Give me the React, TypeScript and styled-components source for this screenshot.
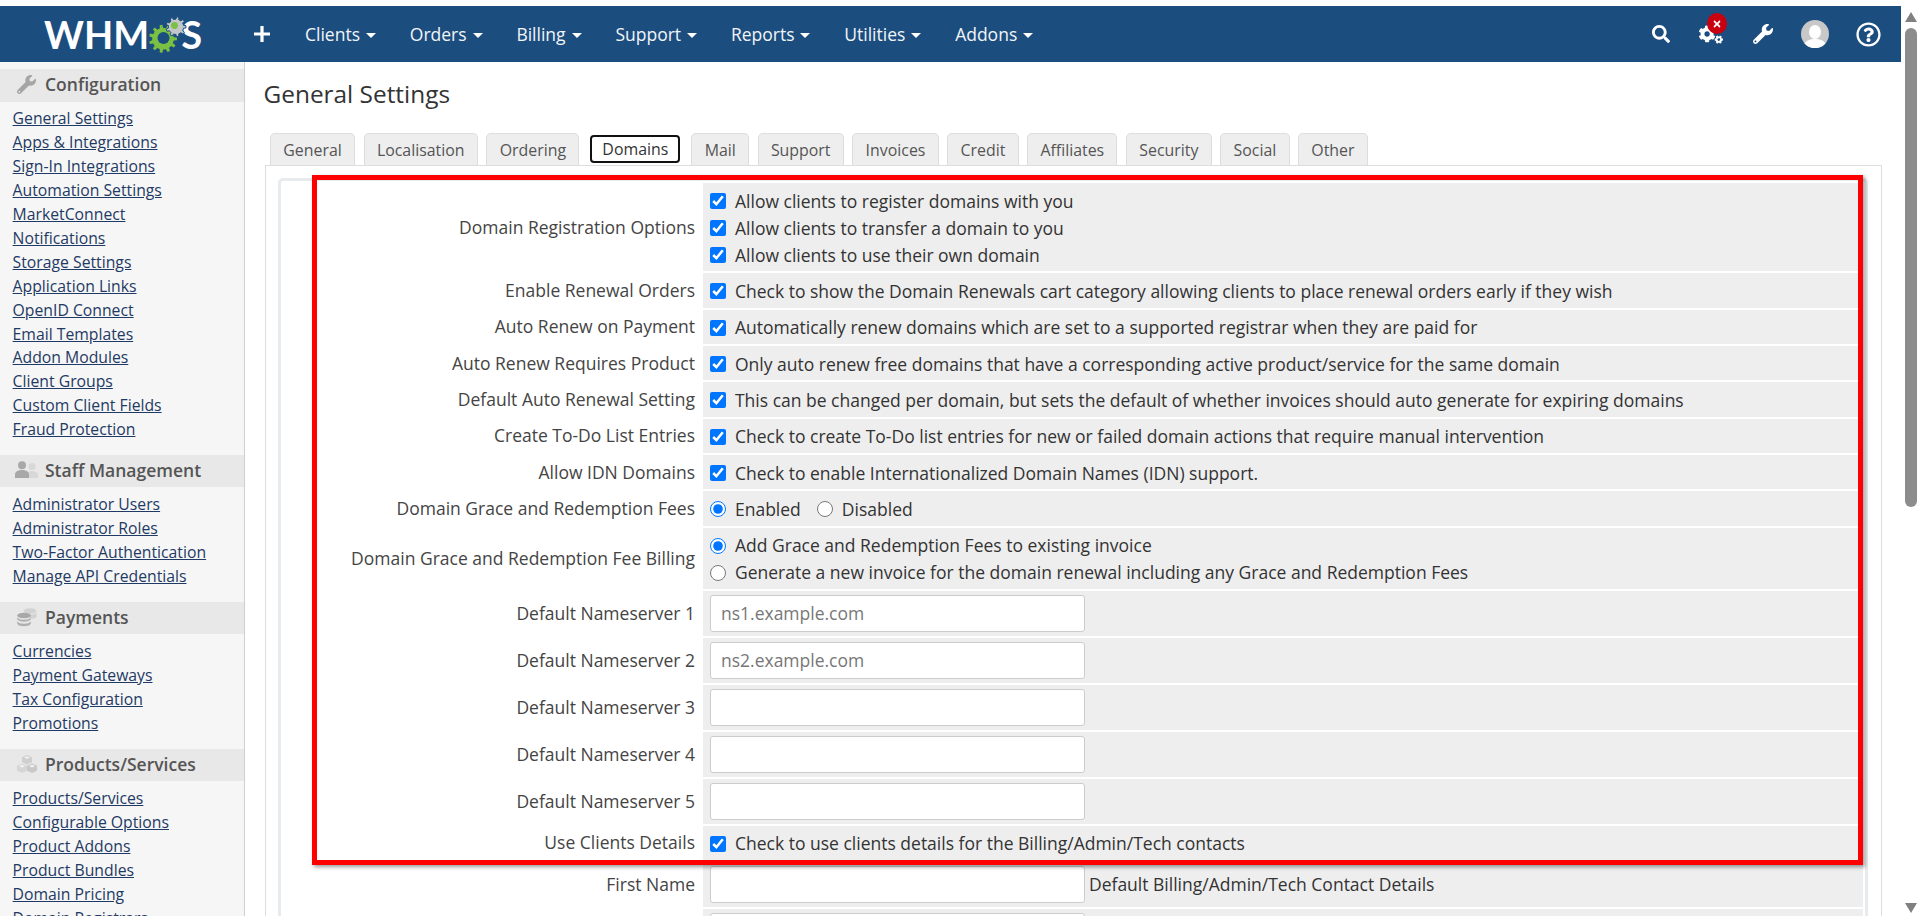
import React from "react";
import styled, { createGlobalStyle } from "styled-components";
import { FaCogs, FaRegQuestionCircle, FaSearch, FaTimes, FaWrench } from "react-icons/fa";

const GlobalStyle = createGlobalStyle`
    html, body {
        margin: 0;
        padding: 0;
        height: 100%;
        overflow: hidden;
        background: #fff;
    }
    * {
        box-sizing: border-box;
    }
    body {
        font-family: "Open Sans", "Liberation Sans", sans-serif;
        font-size: 17.5px;
        color: #333;
    }
`;

const Shell = styled.div`
    display: flex;
    width: 1918px;
    height: 916px;
    overflow: hidden;
`;

const Page = styled.div`
    flex: 1;
    min-width: 0;
    padding-top: 6px;
    display: flex;
    flex-direction: column;
`;

const ScrollTrack = styled.div`
    width: 17px;
    flex: none;
    display: flex;
    flex-direction: column;
    align-items: flex-end;
    padding: 12px 1px 3px 0;
`;

const ArrowUp = styled.div`
    width: 0;
    height: 0;
    border-left: 6.5px solid transparent;
    border-right: 6.5px solid transparent;
    border-bottom: 10px solid #808080;
`;

const ArrowDown = styled(ArrowUp)`
    margin-top: auto;
    border-bottom: 0;
    border-top: 10px solid #808080;
`;

const ScrollThumb = styled.div`
    width: 12px;
    height: 479px;
    margin-top: 6px;
    background: #8c8c8c;
    border-radius: 6px;
`;

const Header = styled.header`
    height: 56px;
    flex: none;
    background: #1c4d7f;
    display: flex;
    align-items: center;
    color: #fff;
`;

const Logo = styled.div`
    width: 244px;
    flex: none;
    padding-left: 44px;
    display: flex;
    align-items: center;
`;

const LogoText = styled.span`
    font-family: Lato, "Open Sans", sans-serif;
    font-weight: 700;
    font-size: 38px;
    line-height: 40px;
    color: #fff;
`;

const GearMark = styled.svg`
    position: relative;
    z-index: 1;
    flex: none;
    overflow: visible;
`;

const NewButton = styled.span`
    font-size: 0;
    margin-left: 10px;
    display: flex;
`;

const NavList = styled.nav`
    display: flex;
    align-items: center;
    margin-left: 35px;
    gap: 33.8px;
`;

const NavItem = styled.span`
    display: flex;
    align-items: center;
    gap: 6px;
    font-size: 17.5px;
    color: #f2f5f8;
`;

const Caret = styled.i`
    width: 0;
    height: 0;
    margin-top: 3px;
    border-left: 5px solid transparent;
    border-right: 5px solid transparent;
    border-top: 5px solid #fff;
`;

const HeaderIcons = styled.div`
    margin-left: auto;
    padding-right: 6px;
    display: flex;
    align-items: center;
    height: 100%;
`;

const IconSlot = styled.span<{ $width: number }>`
    position: relative;
    width: ${(p) => p.$width}px;
    display: flex;
    justify-content: center;
    align-items: center;
    color: #fff;
`;

const AlertBadge = styled.span`
    position: absolute;
    top: -9px;
    left: 22px;
    width: 20px;
    height: 21px;
    border-radius: 50%;
    background: #c8000f;
    display: flex;
    align-items: center;
    justify-content: center;
    color: #fff;
    font-size: 10px;
`;

const Body = styled.div`
    flex: 1;
    min-height: 0;
    display: flex;
`;

const Sidebar = styled.aside`
    width: 245px;
    flex: none;
    padding-top: 7px;
    background: #f6f6f6;
    border-right: 1px solid #cfcfcf;
    overflow: hidden;
`;

const SideSection = styled.section`
    margin-bottom: 12.9px;
`;

const SideHeading = styled.h3`
    margin: 0 0 5.9px;
    height: 32.6px;
    padding: 0 0 2px 15px;
    background: #e8e8e8;
    display: flex;
    align-items: center;
    gap: 7px;
    font-size: 17.5px;
    font-weight: 600;
    color: #555;
`;

const SideIcon = styled.span`
    width: 23px;
    flex: none;
    display: flex;
    justify-content: center;
    color: #a5a5a5;
`;

const SideLink = styled.a`
    display: block;
    height: 23.9px;
    line-height: 23.9px;
    padding-left: 12.6px;
    font-size: 15.75px;
    color: #1f3a64;
    text-decoration: underline;
    white-space: nowrap;
`;

const Main = styled.main`
    flex: 1;
    min-width: 0;
    padding: 0 19px 0 19.5px;
    overflow: hidden;
`;

const Title = styled.h1`
    margin: 0 0 0 -1px;
    height: 71px;
    padding-top: 15px;
    font-size: 24.4px;
    line-height: 34px;
    font-weight: 400;
    color: #333;
`;

const TabRow = styled.div`
    display: flex;
    height: 32px;
    padding-left: 5.5px;
    gap: 8.5px;
`;

const Tab = styled.span<{ $active?: boolean }>`
    display: flex;
    align-items: center;
    padding: 0 12.3px;
    border: 1px solid #ddd;
    border-bottom: 0;
    border-radius: 5px 5px 0 0;
    background: #eee;
    color: #555;
    font-size: 15.9px;

    ${(p) =>
        p.$active &&
        `
        height: 28px;
        margin: 2px 2.5px 0 2.5px;
        padding: 0 10px;
        background: #fff;
        color: #333;
        border: 2px solid #111;
        border-radius: 4px;
    `}
`;

const TabContent = styled.div`
    position: relative;
    height: 800px;
    padding: 12px 12.7px 0 12.1px;
    border: 1px solid #ddd;
    border-bottom: 0;
`;

const Well = styled.div`
    border: 3px solid #e8ebee;
    border-radius: 5px;
`;

const SettingsTable = styled.table`
    width: 100%;
    table-layout: fixed;
    border-collapse: separate;
    border-spacing: 2px;
`;

const LabelCell = styled.td`
    width: 418.4px;
    padding: 0 6px 0 0;
    text-align: right;
    color: #444;
    line-height: 27px;
`;

const ValueCell = styled.td`
    padding: 4.67px 7px 2.66px;
    background: #eee;
    line-height: 27px;
`;

const InputCell = styled(ValueCell)`
    padding: 4px 7px;
    height: 45px;
`;

const OptionLine = styled.label`
    display: flex;
    align-items: center;
    gap: 9px;
    height: 27px;
    white-space: nowrap;
`;

const InlineOptions = styled.div`
    display: flex;
    gap: 16px;
`;

const OptionInput = styled.input`
    width: 16px;
    height: 16px;
    margin: 0;
    flex: none;
`;

const TextField = styled.input`
    width: 375px;
    height: 37px;
    padding: 0 10px;
    border: 1px solid #ccc;
    border-radius: 3px;
    background: #fff;
    font-family: inherit;
    font-size: 17.5px;
    vertical-align: middle;

    &::placeholder {
        color: #777;
        opacity: 1;
    }
`;

const FieldNote = styled.span`
    margin-left: 4px;
    vertical-align: middle;
`;

const RedMark = styled.div`
    position: absolute;
    left: 46.5px;
    top: 9px;
    width: 1551px;
    height: 690px;
    border: 5.5px solid #f00;
    box-shadow: 2px 2px 4px rgba(0, 0, 0, 0.4);
    pointer-events: none;
`;

function gearPath(cx: number, cy: number, outer: number, inner: number, teeth: number) {
    const points: string[] = [];
    const step = (Math.PI * 2) / teeth;
    for (let i = 0; i < teeth; i++) {
        const a = i * step;
        const pairs: [number, number][] = [
            [inner, a - step * 0.5],
            [inner, a - step * 0.27],
            [outer, a - step * 0.17],
            [outer, a + step * 0.17],
            [inner, a + step * 0.27],
        ];
        pairs.forEach(([r, t]) => {
            points.push(`${(cx + r * Math.cos(t)).toFixed(2)} ${(cy + r * Math.sin(t)).toFixed(2)}`);
        });
    }
    return `M${points.join("L")}Z`;
}

const LogoGears = () => (
    <GearMark width="32" height="36" viewBox="0 0 32 36" aria-hidden="true">
        <path d={gearPath(14, 22.8, 14, 10.8, 11)} fill="#7ac143" />
        <circle cx="14.5" cy="22" r="6" fill="#1c4d7f" />
        <path d={gearPath(27, 10.8, 10, 7.6, 9)} fill="#c3c7ca" stroke="#1c4d7f" strokeWidth="1" />
        <circle cx="25.5" cy="9.500" r="3.4" fill="#7ac143" />
    </GearMark>
);

const PlusIcon = () => (
    <svg width="16" height="16" viewBox="0 0 16 16" aria-hidden="true">
        <path d="M6.4 0h3.2v6.4H16v3.2H9.6V16H6.4V9.6H0V6.4h6.4z" fill="#fff" />
    </svg>
);

const AvatarIcon = () => (
    <svg width="28" height="28" viewBox="0 0 28 28" aria-hidden="true">
        <circle cx="14" cy="14" r="14" fill="#c8c8c8" />
        <ellipse cx="14" cy="12" rx="6" ry="7" fill="#fff" />
        <path d="M3.5 23.5c2.5-3.5 6-4.5 10.5-4.5s8 1 10.5 4.500a14 14 0 0 1-21 0z" fill="#fff" />
    </svg>
);

const StaffIcon = () => (
    <svg width="23" height="18" viewBox="0 0 23 18" aria-hidden="true">
        <circle cx="17" cy="5.5" r="3.6" fill="#d8d8d8" />
        <path d="M12 17v-3c0-2.5 2-4 5-4s6 1.500 6 4v3z" fill="#d8d8d8" />
        <circle cx="7" cy="4.300" r="4" fill="#a8a8a8" />
        <path d="M0 17v-3.500C0 10.500 3 9 7 9s7 1.500 7 4.500V17z" fill="#a8a8a8" />
    </svg>
);

const CoinsIcon = () => (
    <svg width="20" height="19" viewBox="0 0 20 19" aria-hidden="true">
        <ellipse cx="13" cy="3" rx="6.500" ry="2.800" fill="#d2d2d2" />
        <path d="M6.500 4.500c1 1.500 3.500 2.200 6.500 2.200s5.500-.700 6.500-2.200V9c-1 1-2.500 1.500-4 1.700L6.500 7z" fill="#d2d2d2" />
        <ellipse cx="7" cy="7.500" rx="6.800" ry="2.800" fill="#a8a8a8" />
        <path d="M.2 9.300C1 11 3.800 11.800 7 11.800s6-.800 6.800-2.500v2c-.800 1.600-3.600 2.400-6.800 2.400S1 12.900.2 11.300z" fill="#b0b0b0" />
        <path d="M.2 13.300C1 15 3.800 15.800 7 15.800s6-.800 6.800-2.500v2.500C13 17.500 10.200 18.300 7 18.300s-6-.800-6.800-2.500z" fill="#b0b0b0" />
    </svg>
);

const CubesIcon = () => (
    <svg width="20" height="18" viewBox="0 0 20 18" aria-hidden="true">
        <path d="M10 0l5 2.200v5L10 9.400 5 7.200v-5z" fill="#cfcfcf" />
        <path d="M5 8.600l5 2.200v5L5 18 0 15.800v-5z" fill="#d6d6d6" />
        <path d="M15 8.600l5 2.200v5L15 18l-5-2.200v-5z" fill="#c8c8c8" />
        <path d="M10 1.200l3 1.300-3 1.300-3-1.300zM5 9.800l3 1.300-3 1.300-3-1.300zM15 9.800l3 1.300-3 1.300-3-1.300z" fill="#f2f2f2" />
    </svg>
);

const sideMenu = [
    {
        title: "Configuration",
        icon: <FaWrench size={19} />,
        links: [
            "General Settings",
            "Apps & Integrations",
            "Sign-In Integrations",
            "Automation Settings",
            "MarketConnect",
            "Notifications",
            "Storage Settings",
            "Application Links",
            "OpenID Connect",
            "Email Templates",
            "Addon Modules",
            "Client Groups",
            "Custom Client Fields",
            "Fraud Protection",
        ],
    },
    {
        title: "Staff Management",
        icon: <StaffIcon />,
        links: ["Administrator Users", "Administrator Roles", "Two-Factor Authentication", "Manage API Credentials"],
    },
    {
        title: "Payments",
        icon: <CoinsIcon />,
        links: ["Currencies", "Payment Gateways", "Tax Configuration", "Promotions"],
    },
    {
        title: "Products/Services",
        icon: <CubesIcon />,
        links: [
            "Products/Services",
            "Configurable Options",
            "Product Addons",
            "Product Bundles",
            "Domain Pricing",
            "Domain Registrars",
        ],
    },
];

const navItems = ["Clients", "Orders", "Billing", "Support", "Reports", "Utilities", "Addons"];

const tabs = [
    "General",
    "Localisation",
    "Ordering",
    "Domains",
    "Mail",
    "Support",
    "Invoices",
    "Credit",
    "Affiliates",
    "Security",
    "Social",
    "Other",
];

const checkRows = [
    ["Enable Renewal Orders", "Check to show the Domain Renewals cart category allowing clients to place renewal orders early if they wish"],
    ["Auto Renew on Payment", "Automatically renew domains which are set to a supported registrar when they are paid for"],
    ["Auto Renew Requires Product", "Only auto renew free domains that have a corresponding active product/service for the same domain"],
    ["Default Auto Renewal Setting", "This can be changed per domain, but sets the default of whether invoices should auto generate for expiring domains"],
    ["Create To-Do List Entries", "Check to create To-Do list entries for new or failed domain actions that require manual intervention"],
    ["Allow IDN Domains", "Check to enable Internationalized Domain Names (IDN) support."],
];

const nameservers = [
    ["Default Nameserver 1", "ns1.example.com"],
    ["Default Nameserver 2", "ns2.example.com"],
    ["Default Nameserver 3", ""],
    ["Default Nameserver 4", ""],
    ["Default Nameserver 5", ""],
];

export default function App() {
    return (
        <>
            <GlobalStyle />
            <Shell>
                <Page>
                    <Header>
                        <Logo>
                            <LogoText>WHM</LogoText>
                            <LogoGears />
                            <LogoText>S</LogoText>
                        </Logo>
                        <NewButton>
                            <PlusIcon />
                        </NewButton>
                        <NavList>
                            {navItems.map((item) => (
                                <NavItem key={item}>
                                    {item}
                                    <Caret />
                                </NavItem>
                            ))}
                        </NavList>
                        <HeaderIcons>
                            <IconSlot $width={48}>
                                <FaSearch size={18} />
                            </IconSlot>
                            <IconSlot $width={52}>
                                <FaCogs size={24} />
                                <AlertBadge>
                                    <FaTimes />
                                </AlertBadge>
                            </IconSlot>
                            <IconSlot $width={52}>
                                <FaWrench size={20} />
                            </IconSlot>
                            <IconSlot $width={52}>
                                <AvatarIcon />
                            </IconSlot>
                            <IconSlot $width={54}>
                                <FaRegQuestionCircle size={25} />
                            </IconSlot>
                        </HeaderIcons>
                    </Header>
                    <Body>
                        <Sidebar>
                            {sideMenu.map((section) => (
                                <SideSection key={section.title}>
                                    <SideHeading>
                                        <SideIcon>{section.icon}</SideIcon>
                                        {section.title}
                                    </SideHeading>
                                    {section.links.map((link) => (
                                        <SideLink key={link} href="#">
                                            {link}
                                        </SideLink>
                                    ))}
                                </SideSection>
                            ))}
                        </Sidebar>
                        <Main>
                            <Title>General Settings</Title>
                            <TabRow>
                                {tabs.map((tab) => (
                                    <Tab key={tab} $active={tab === "Domains"}>
                                        {tab}
                                    </Tab>
                                ))}
                            </TabRow>
                            <TabContent>
                                <Well>
                                    <SettingsTable>
                                        <tbody>
                                            <tr>
                                                <LabelCell>Domain Registration Options</LabelCell>
                                                <ValueCell>
                                                    <OptionLine>
                                                        <OptionInput type="checkbox" defaultChecked />
                                                        Allow clients to register domains with you
                                                    </OptionLine>
                                                    <OptionLine>
                                                        <OptionInput type="checkbox" defaultChecked />
                                                        Allow clients to transfer a domain to you
                                                    </OptionLine>
                                                    <OptionLine>
                                                        <OptionInput type="checkbox" defaultChecked />
                                                        Allow clients to use their own domain
                                                    </OptionLine>
                                                </ValueCell>
                                            </tr>
                                            {checkRows.map(([label, text]) => (
                                                <tr key={label}>
                                                    <LabelCell>{label}</LabelCell>
                                                    <ValueCell>
                                                        <OptionLine>
                                                            <OptionInput type="checkbox" defaultChecked />
                                                            {text}
                                                        </OptionLine>
                                                    </ValueCell>
                                                </tr>
                                            ))}
                                            <tr>
                                                <LabelCell>Domain Grace and Redemption Fees</LabelCell>
                                                <ValueCell>
                                                    <InlineOptions>
                                                        <OptionLine>
                                                            <OptionInput type="radio" name="fees" defaultChecked />
                                                            Enabled
                                                        </OptionLine>
                                                        <OptionLine>
                                                            <OptionInput type="radio" name="fees" />
                                                            Disabled
                                                        </OptionLine>
                                                    </InlineOptions>
                                                </ValueCell>
                                            </tr>
                                            <tr>
                                                <LabelCell>Domain Grace and Redemption Fee Billing</LabelCell>
                                                <ValueCell>
                                                    <OptionLine>
                                                        <OptionInput type="radio" name="billing" defaultChecked />
                                                        Add Grace and Redemption Fees to existing invoice
                                                    </OptionLine>
                                                    <OptionLine>
                                                        <OptionInput type="radio" name="billing" />
                                                        Generate a new invoice for the domain renewal including any Grace and Redemption Fees
                                                    </OptionLine>
                                                </ValueCell>
                                            </tr>
                                            {nameservers.map(([label, hint]) => (
                                                <tr key={label}>
                                                    <LabelCell>{label}</LabelCell>
                                                    <InputCell>
                                                        <TextField type="text" placeholder={hint} />
                                                    </InputCell>
                                                </tr>
                                            ))}
                                            <tr>
                                                <LabelCell>Use Clients Details</LabelCell>
                                                <ValueCell>
                                                    <OptionLine>
                                                        <OptionInput type="checkbox" defaultChecked />
                                                        Check to use clients details for the Billing/Admin/Tech contacts
                                                    </OptionLine>
                                                </ValueCell>
                                            </tr>
                                            <tr>
                                                <LabelCell>First Name</LabelCell>
                                                <InputCell>
                                                    <TextField type="text" />
                                                    <FieldNote>Default Billing/Admin/Tech Contact Details</FieldNote>
                                                </InputCell>
                                            </tr>
                                            <tr>
                                                <LabelCell />
                                                <InputCell>
                                                    <TextField type="text" />
                                                </InputCell>
                                            </tr>
                                        </tbody>
                                    </SettingsTable>
                                </Well>
                                <RedMark />
                            </TabContent>
                        </Main>
                    </Body>
                </Page>
                <ScrollTrack>
                    <ArrowUp />
                    <ScrollThumb />
                    <ArrowDown />
                </ScrollTrack>
            </Shell>
        </>
    );
}
